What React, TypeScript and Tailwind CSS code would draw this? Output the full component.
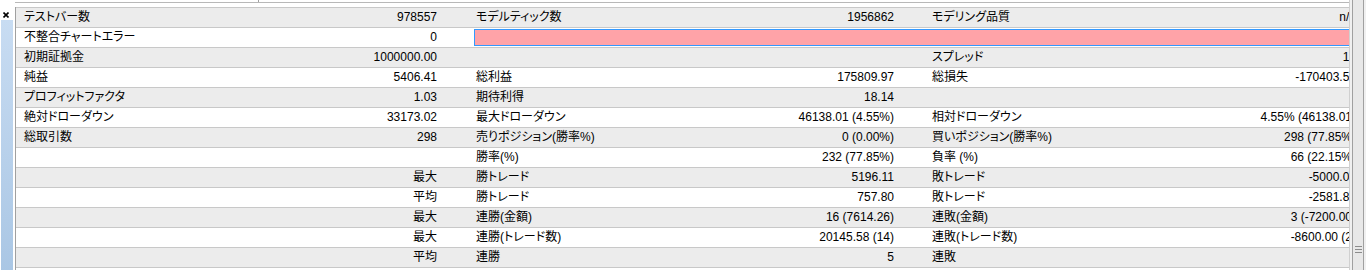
import React from "react";

type Row = string[];

const rows: Row[] = [
  ["テストバー数", "978557", "モデルティック数", "1956862", "モデリング品質", "n/a"],
  ["不整合チャートエラー", "0", "PINK"],
  ["初期証拠金", "1000000.00", "", "", "スプレッド", "10"],
  ["純益", "5406.41", "総利益", "175809.97", "総損失", "-170403.50"],
  ["プロフィットファクタ", "1.03", "期待利得", "18.14", "", ""],
  ["絶対ドローダウン", "33173.02", "最大ドローダウン", "46138.01 (4.55%)", "相対ドローダウン", "4.55% (46138.01)"],
  ["総取引数", "298", "売りポジション(勝率%)", "0 (0.00%)", "買いポジション(勝率%)", "298 (77.85%)"],
  ["", "", "勝率(%)", "232 (77.85%)", "負率 (%)", "66 (22.15%)"],
  ["", "最大", "勝トレード", "5196.11", "敗トレード", "-5000.00"],
  ["", "平均", "勝トレード", "757.80", "敗トレード", "-2581.80"],
  ["", "最大", "連勝(金額)", "16 (7614.26)", "連敗(金額)", "3 (-7200.00)"],
  ["", "最大", "連勝(トレード数)", "20145.58 (14)", "連敗(トレード数)", "-8600.00 (2)"],
  ["", "平均", "連勝", "5", "連敗", ""],
];

function DataRow({ r, i }: { r: Row; i: number }) {
  const bg = i % 2 === 0 ? "bg-[#ececec]" : "bg-white";
  const cell = "h-[19px] flex items-center whitespace-nowrap overflow-hidden";
  return (
    <div className={`flex border-b border-[#c8c8c8] ${bg}`}>
      <div className={`${cell} w-[244px] pl-[8px]`}>{r[0]}</div>
      <div className={`${cell} w-[214px] justify-end pr-[37px]`}>{r[1]}</div>
      {r[2] === "PINK" ? (
        <div className="w-[875px] h-[19px] flex items-center overflow-hidden">
          <div className="w-[900px] h-[17px] shrink-0 bg-[#ffa3a8] border border-[#3399ff]" />
        </div>
      ) : (
        <>
          <div className={`${cell} w-[226px] pl-[2px]`}>{r[2]}</div>
          <div className={`${cell} w-[230px] justify-end pr-[36px]`}>{r[3]}</div>
          <div className={`${cell} w-[220px] pl-[2px]`}>{r[4]}</div>
          <div className={`${cell} w-[199px] justify-end`}>
            <span className="-mr-[7px]">{r[5]}</span>
          </div>
        </>
      )}
    </div>
  );
}

export default function App() {
  return (
    <div
      className="w-[1366px] h-[270px] flex overflow-hidden bg-white text-black text-[12px] leading-[19px] [font-feature-settings:'palt']"
      style={{ fontFamily: '"Liberation Sans", "Noto Sans CJK JP", sans-serif' }}
    >
      <div className="w-[1349px] flex flex-col">
        {/* top strip */}
        <div className="h-[7px] flex shrink-0">
          <div className="w-[15px]" />
          <div className="flex-1 flex flex-col">
            <div className="h-[2px] flex">
              <div className="w-[243px]" />
              <div className="w-px bg-[#a0a0a0]" />
            </div>
            <div className="h-px bg-[#b8b8b8]" />
          </div>
        </div>
        <div className="flex flex-1">
          {/* left panel */}
          <div className="w-[15px] flex flex-col bg-white">
            <div className="h-[13px] flex items-center justify-center pr-[3px] pt-[2px]">
              <svg width="6" height="6" viewBox="0 0 6 6">
                <path d="M0.5 0.5 L5.5 5.5 M5.5 0.5 L0.5 5.5" stroke="#000" strokeWidth="1.6" />
              </svg>
            </div>
            <div className="flex-1 ml-[1px] mr-[2px] bg-gradient-to-b from-[#c8dcf2] to-[#a9c6e4]" />
          </div>
          <div className="w-px bg-[#a0a0a0]" />
          {/* table */}
          <div className="w-[1333px] overflow-hidden border-t border-[#c8c8c8]">
            {rows.map((r, i) => (
              <DataRow key={i} r={r} i={i} />
            ))}
            <div className="h-[10px] bg-white" />
          </div>
        </div>
      </div>
      {/* scrollbar */}
      <div className="w-[17px] flex bg-[#f0f0f0]">
        <div className="w-px bg-[#d0d0d0]" />
        <div className="w-[2px]" />
        <div className="w-px bg-[#a0a0a0]" />
        <div className="w-[10px] bg-[#e8e8e8] flex flex-col items-center justify-end pb-[17px]">
          <div className="w-[7px] flex flex-col gap-[2px]">
            <div className="h-px bg-[#8c8c8c]" />
            <div className="h-px bg-[#8c8c8c]" />
            <div className="h-px bg-[#8c8c8c]" />
          </div>
        </div>
        <div className="w-px bg-[#a0a0a0]" />
        <div className="w-[2px]" />
      </div>
    </div>
  );
}
